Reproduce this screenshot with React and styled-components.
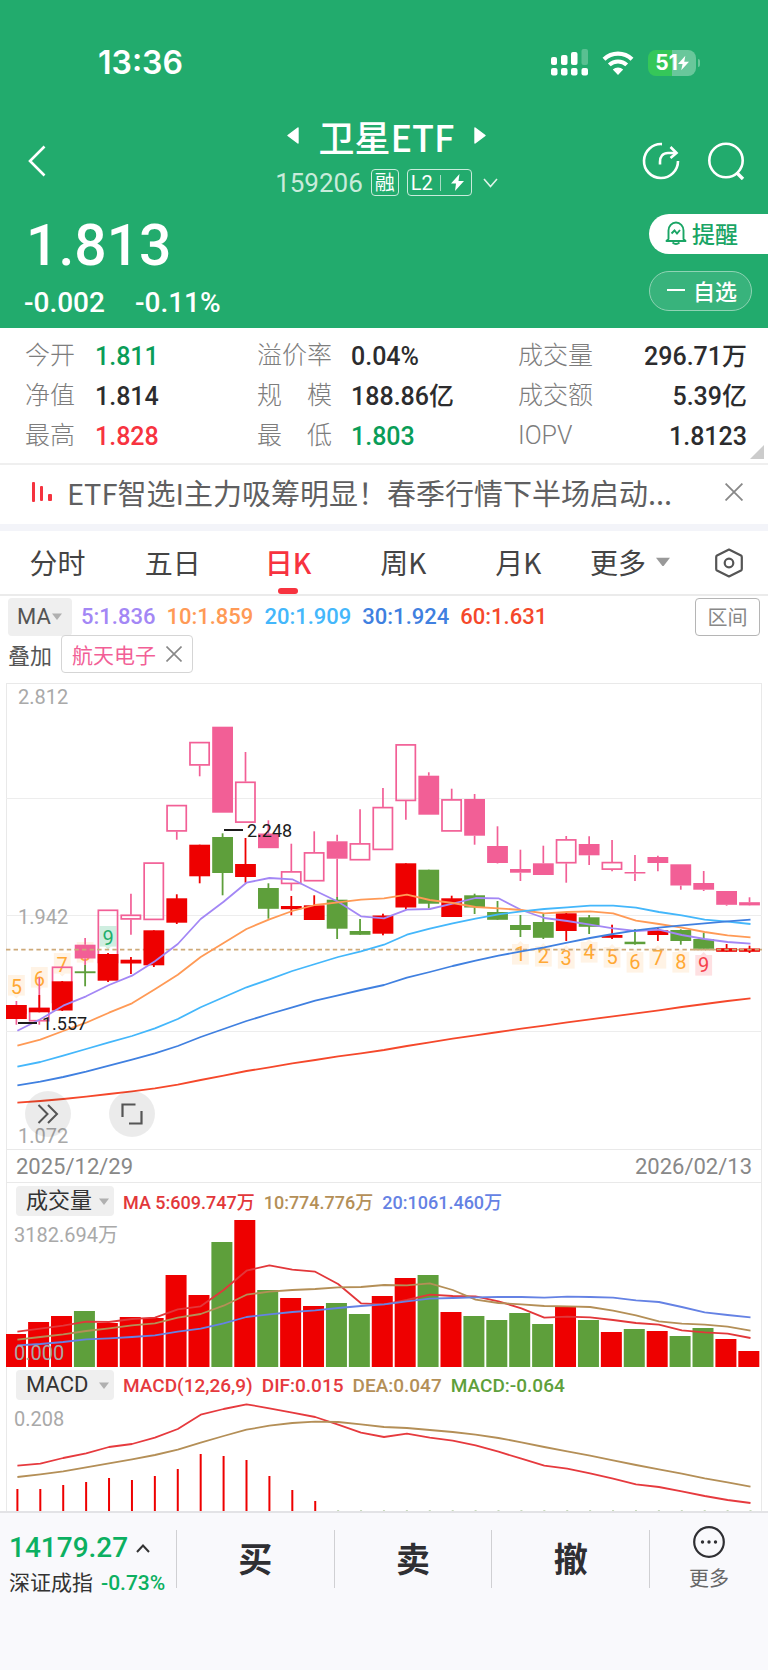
import React from "react";
import styled, { createGlobalStyle } from "styled-components";

const STEP = 22.91;
const cx = (i) => 10.4 + i * STEP;
const line = (ys) => ys.map((y, i) => `${(cx(i) + 1).toFixed(1)},${y}`).join(" ");

const RED = "#ee0000";
const GREEN = "#5e9f3b";
const PINK = "#f25f96";

// 1 = up day, 0 = down day
const trend = [
  1, 1, 1, 0, 1, 1, 1, 1, 1, 0, 1, 0, 1, 1, 0, 0, 1, 1, 0, 1, 0, 0, 0, 0, 1, 0,
  1, 0, 1, 0, 0, 1, 1,
];

// [high, body top, body bottom, low]
const candles = [
  [322, 322, 336, 336], [312, 324.7, 329.3, 329.3], [298, 298.3, 327.5, 328],
  [282, 288.3, 290.2, 303.3], [270, 271, 297.7, 299], [274, 276.7, 280.5, 291],
  [247.3, 247.3, 282.3, 284], [211.3, 215.3, 239.7, 241], [161.7, 161.7, 193.3, 200.3],
  [150.3, 154, 190, 212.3], [155, 181, 194, 199.7], [200.3, 205, 225.8, 235.7],
  [213, 223, 226.2, 232.3], [212.3, 222.3, 237, 237], [214, 216.7, 245.7, 256],
  [236, 248, 251.8, 251.8], [230.7, 232.5, 250.7, 252.3], [180.3, 180.3, 224.5, 226.5],
  [186.7, 186.7, 220.7, 225.5], [212.7, 215.3, 234, 234], [210.7, 212.3, 224.5, 231],
  [218, 229, 236.8, 236.8], [232, 242, 247, 254], [231, 239, 254.8, 256],
  [229.5, 230.3, 248, 258], [232, 234.3, 243.8, 251], [241.7, 252, 254.8, 256],
  [246, 258.7, 261.2, 261.7], [244.3, 247.3, 252, 258], [246.3, 247, 258, 261.7],
  [249.7, 256, 265.8, 265.8], [261, 265.2, 268.8, 268.8], [262.7, 265.5, 268.8, 270],
];

// [high, body top, body bottom, low, filled]
const overlay = [
  [318, 326, 331, 341.7, 1], [294.3, 325, 338.3, 341.7, 0], [283.7, 283.7, 320, 320, 0],
  [255, 261.7, 275.5, 288, 1], [226.7, 226.7, 280, 280, 0], [210.7, 231.7, 236.5, 251.7, 0],
  [179.5, 179.5, 237, 237, 0], [122, 122, 148.5, 156.7, 0], [59, 59, 82.5, 93.3, 0],
  [43.7, 43.7, 129.7, 129.7, 1], [69, 98.7, 139.7, 139.7, 0], [137.3, 150.5, 165.2, 165.2, 1],
  [160.7, 188.3, 201, 207.7, 0], [148.3, 169.3, 198.3, 198.3, 0], [151.7, 158.3, 175.7, 214.3, 1],
  [126.3, 160.3, 177.3, 177.3, 0], [105, 124, 167, 167, 0], [61.3, 61.3, 118, 136.7, 0],
  [89.3, 92.7, 131.7, 131.7, 1], [105.7, 116.3, 148.5, 148.5, 0], [111, 116, 152.7, 161.7, 1],
  [143.3, 163, 180, 180.5, 1], [166.7, 186, 189.7, 198, 1], [162.7, 180.3, 192, 192, 1],
  [153, 156.3, 180.3, 199.7, 0], [153.3, 161, 172.3, 182, 1], [157, 179, 186.7, 188.3, 0],
  [172, 189, 190.5, 198, 1], [172.7, 174, 180, 188.3, 1], [181.3, 181.3, 202.5, 206.7, 1],
  [188, 200, 206.7, 208, 1], [208, 208, 221.8, 222.7, 1], [214.3, 219.2, 222.4, 222.7, 1],
];

const priceLines = [
  {
    color: "#a387f5",
    ys: [347.7, 336.3, 322.7, 313.3, 302, 292.7, 278.3, 261, 236, 218.7, 199.7, 195, 196.3, 207.7, 218.7, 233.3, 235.3, 226.7, 226, 220.7, 215, 215.3, 227, 235, 238, 241.7, 245.3, 248, 246.7, 252, 256, 259, 260.7],
  },
  {
    color: "#ff9a56",
    ys: [362.7, 356.7, 348, 339.7, 329.7, 320.3, 306.3, 291.7, 274, 260, 246, 236.3, 228, 222, 219.3, 216.7, 215.3, 211.7, 217, 220, 224, 225.3, 227, 230.3, 229, 228.3, 230.3, 237.7, 241, 244.7, 249, 252.3, 254.3],
  },
  {
    color: "#44b7fb",
    ys: [383.7, 379, 372.7, 366, 359.3, 353, 345.3, 336, 324.3, 314.3, 304.3, 296.3, 288, 281, 274, 268.3, 261.7, 251.7, 245.7, 240.3, 235.7, 231.3, 228.3, 226, 224.3, 222.7, 222.7, 224.7, 229, 232.3, 236.7, 238.7, 241],
  },
  {
    color: "#4080e0",
    ys: [402.3, 398.7, 394, 388.7, 382.7, 376.7, 370.3, 363, 354, 346, 338, 331, 324.3, 317.7, 312.3, 307, 302, 294.7, 289, 283, 277.7, 272.7, 268.3, 264.3, 259.7, 255, 251, 247.3, 244.7, 242.3, 240.3, 238.3, 236.7],
  },
  {
    color: "#f5482b",
    ys: [419.7, 418, 416, 413.7, 411, 408.3, 405.3, 401.7, 397, 392.7, 388, 384.3, 380.3, 377, 373.3, 370.3, 367, 363, 359.3, 355.7, 352.3, 349, 345.7, 342.7, 339.3, 336.3, 333.3, 330.3, 327.3, 324, 321, 318, 315.3],
  },
];

const volumes = [
  33, 45, 51, 56, 44, 50, 49, 92, 72, 125, 147, 77, 69, 61, 64, 53, 71, 89, 92,
  55, 51, 47, 54, 43, 60, 47, 35, 38, 36, 31, 39, 28, 16,
];

const volumeLines = [
  {
    color: "#e2373a",
    ys: [112.7, 109.7, 106.7, 102.7, 103, 100, 98.7, 90.3, 87.3, 71, 51.7, 46.3, 50.7, 52.7, 65, 84.3, 85.3, 81, 75.7, 77, 77.3, 82.3, 89.3, 98.7, 97.7, 98.3, 101, 104, 105.7, 111.3, 113.3, 114.7, 119],
  },
  {
    color: "#b48f57",
    ys: [120.7, 118, 115.3, 112, 109.3, 106.3, 104.3, 98.7, 95, 86.7, 75.7, 72.7, 71, 70, 68.3, 68, 66, 66.3, 64.3, 71, 80.7, 84, 85.3, 87, 87.3, 88, 91.7, 96.3, 102.3, 104.7, 105.7, 107.7, 111.7],
  },
  {
    color: "#6582e4",
    ys: [126.3, 125, 123, 120.3, 119.3, 118, 116.3, 112.7, 109.7, 104.3, 98, 95.3, 93, 91.3, 89, 87, 85.3, 82.3, 79.7, 79, 78.3, 78, 78, 78.7, 77.7, 78, 78.7, 81.3, 83, 88, 93.3, 96, 98.3],
  },
];

const macdBars = [22, 22, 26, 29, 33, 31, 35, 42, 57, 55, 51, 35, 21, 10];

const macdLines = [
  {
    color: "#e63a3e",
    ys: [62.7, 60.7, 55, 50.3, 44, 41, 34.7, 26, 11.7, 6, 1.3, 5.3, 9.7, 14, 21.7, 29.7, 34, 30.7, 34.7, 37.7, 42.3, 48.7, 55.7, 62.7, 65.7, 70.3, 75.7, 81.3, 84, 88.3, 93, 97, 100],
  },
  {
    color: "#b48f57",
    ys: [74, 71.3, 68.3, 64.3, 60.3, 56.3, 52, 46.7, 39.7, 33, 26.7, 22.7, 20, 18.7, 19, 21.3, 24, 25, 27, 29, 31.7, 35, 39.3, 44, 48.3, 52.7, 57.3, 62, 66.3, 70.7, 75.3, 79.3, 83.7],
  },
];

// nine-turn counts: [candle, count, top]
const upCounts = [
  [0, 5, 292], [1, 6, 284], [2, 7, 270], [3, 8, 259], [4, 9, 243],
];
const downCounts = [
  [22, 1, 261], [23, 2, 263], [24, 3, 265], [25, 4, 259], [26, 5, 264],
  [27, 6, 269], [28, 7, 265], [29, 8, 269], [30, 9, 272],
];

const stats = [
  ["今开", "1.811", "#0a9d58"],
  ["溢价率", "0.04%"],
  ["成交量", "296.71万"],
  ["净值", "1.814"],
  ["规　模", "188.86亿"],
  ["成交额", "5.39亿"],
  ["最高", "1.828", "#f7333f"],
  ["最　低", "1.803", "#0a9d58"],
  ["IOPV", "1.8123"],
];

const tabs = ["分时", "五日", "日K", "周K", "月K"];

const Count = ({ item: [i, n, y], down }) => {
  const nine = n === 9;
  const color = nine ? (down ? "#f5404c" : "#1fae6c") : "#ffa834";
  const back = nine ? (down ? "#fee0e2" : "#cfeee0") : "#fff3e5";
  const x = cx(i);
  return (
    <g>
      <rect x={x - 8.4} y={y} width="16.8" height="20.6" fill={back} />
      {down ? (
        <path d={`M${x - 3} ${y}l3 -3l3 3z`} fill={back} />
      ) : (
        <path d={`M${x - 3} ${y + 20.6}l3 3l3 -3z`} fill={back} />
      )}
      <text x={x} y={y + (down ? 17 : 19)} fontSize="20" textAnchor="middle" fill={color}>
        {n}
      </text>
    </g>
  );
};

const Lines = ({ items }) =>
  items.map((l) => (
    <polyline
      key={l.color}
      points={line(l.ys)}
      fill="none"
      stroke={l.color}
      strokeWidth="1.8"
      strokeLinejoin="round"
    />
  ));

const PriceChart = () => (
  <Chart viewBox="0 0 756 466" role="img" aria-label="日K">
    {[116, 233, 349].map((y) => (
      <rect key={y} x="0" y={y - 1} width="756" height="1" fill="#ededed" />
    ))}
    <g fontSize="20" fill="#a9a9a9">
      <text x="12" y="21">2.812</text>
      <text x="12" y="241">1.942</text>
      <text x="12" y="460">1.072</text>
    </g>
    {upCounts.map((c) => (
      <Count key={c[0]} item={c} />
    ))}
    {downCounts.map((c) => (
      <Count key={c[0]} item={c} down />
    ))}
    {overlay.map(([h, t, b, l, filled], i) => (
      <g key={i} stroke={PINK} strokeWidth="1.7">
        {h < t && <path d={`M${cx(i)} ${h}V${t}`} />}
        {l > b && <path d={`M${cx(i)} ${b}V${l}`} />}
        {filled ? (
          <rect x={cx(i) - 10.4} y={t} width="20.8" height={b - t} fill={PINK} stroke="none" />
        ) : (
          <rect x={cx(i) - 9.7} y={t + 0.6} width="19.2" height={b - t - 1.2} fill="none" />
        )}
      </g>
    ))}
    <path d="M0 266.7H756" stroke="#cda978" strokeWidth="1.7" strokeDasharray="4.4 3.2" />
    {candles.map(([h, t, b, l], i) => (
      <g key={i} fill={trend[i] ? RED : GREEN}>
        <rect x={cx(i) - 0.9} y={h} width="1.8" height={l - h} />
        <rect x={cx(i) - 10.4} y={t} width="20.8" height={b - t} />
      </g>
    ))}
    <path d="M688 266.7H756" stroke="#cda978" strokeWidth="1.7" strokeDasharray="4.4 3.2" />
    <Lines items={priceLines} />
    <g fill="#1c1c1c" fontSize="18">
      <rect x="218" y="146" width="19" height="2" />
      <text x="241" y="154">2.248</text>
      <rect x="12" y="339" width="19" height="2" />
      <text x="36" y="347">1.557</text>
    </g>
  </Chart>
);

const VolumeChart = () => (
  <Chart viewBox="0 0 756 148" role="img" aria-label="成交量">
    {volumes.map((v, i) => (
      <rect
        key={i}
        x={i ? cx(i) - 11.2 : 0}
        y={148 - v}
        width={i ? 21 : 20}
        height={v}
        fill={trend[i] ? RED : GREEN}
      />
    ))}
    <Lines items={volumeLines} />
    <g fontSize="20" fill="#a9a9a9">
      <text x="8" y="23">3182.694万</text>
      <text x="8" y="141">0.000</text>
    </g>
  </Chart>
);

const MacdChart = () => (
  <Chart viewBox="0 0 756 108" role="img" aria-label="MACD">
    {trend.map((_, i) =>
      macdBars[i] ? (
        <rect key={i} x={cx(i)} y={108 - macdBars[i]} width="2" height={macdBars[i]} fill={RED} />
      ) : (
        <rect key={i} x={cx(i)} y="107" width="2" height="1" fill="#c9d9bd" />
      )
    )}
    <Lines items={macdLines} />
    <text x="8" y="23" fontSize="20" fill="#a9a9a9">0.208</text>
  </Chart>
);

const Caret = ({ size = 10, color = "#b0b0b0" }) => (
  <svg width={size} height={size * 0.7} viewBox="0 0 10 7">
    <path d="M0 .5H10L5 7z" fill={color} />
  </svg>
);

const Cross = ({ size = 16, color = "#888" }) => (
  <svg width={size} height={size} viewBox="0 0 16 16">
    <path d="M.5 .5L15.5 15.5M15.5 .5L.5 15.5" stroke={color} strokeWidth="1.6" />
  </svg>
);

const Picker = ({ label, children }) => (
  <PickerBox>
    <select aria-label={label}>
      <option>{children}</option>
    </select>
    <Caret />
  </PickerBox>
);

export default function App() {
  return (
    <Page>
      <GlobalStyle />
      <Header>
        <StatusBar>
          <time>13:36</time>
          <StatusIcons>
            <svg width="37" height="27" viewBox="0 0 37 27" fill="#fff">
              <rect x="0" y="8" width="6" height="8" rx="2" />
              <rect x="10" y="6" width="6.5" height="10" rx="2" />
              <rect x="20" y="3" width="6.5" height="13" rx="2" />
              <rect x="30.5" y="0" width="6.5" height="16" rx="2" opacity=".25" />
              {[0, 10, 20, 30.5].map((x) => (
                <rect key={x} x={x} y="19" width="6.5" height="7.5" rx="2" />
              ))}
            </svg>
            <svg width="32" height="24" viewBox="0 0 32 24" fill="none" stroke="#fff">
              <path d="M2 8.2A20.3 20.3 0 0 1 30 8.2" strokeWidth="4.2" />
              <path d="M7.3 13.9A12.6 12.6 0 0 1 24.7 13.9" strokeWidth="4" />
              <path d="M16 24L10.8 18.6A7.6 7.6 0 0 1 21.2 18.6Z" fill="#fff" stroke="none" />
            </svg>
            <Battery>
              51
              <svg width="11" height="16" viewBox="0 0 12 16">
                <path d="M8 0L0 9H5L3.5 16L12 6.5H6.8z" fill="#fff" />
              </svg>
            </Battery>
          </StatusIcons>
        </StatusBar>
        <NavBar>
          <IconButton aria-label="返回">
            <svg width="18" height="32" viewBox="0 0 18 32" fill="none" stroke="#fff" strokeWidth="2.6">
              <path d="M16.5 1.5L2 16L16.5 30.5" />
            </svg>
          </IconButton>
          <TitleBlock>
            <Title>
              <ArrowButton aria-label="上一个">
                <svg width="12" height="17" viewBox="0 0 12 17">
                  <path d="M11 1V16L1 8.5z" fill="#fff" stroke="#fff" strokeWidth="1.4" strokeLinejoin="round" />
                </svg>
              </ArrowButton>
              <h1>卫星ETF</h1>
              <ArrowButton aria-label="下一个">
                <svg width="12" height="17" viewBox="0 0 12 17">
                  <path d="M1 1V16L11 8.5z" fill="#fff" stroke="#fff" strokeWidth="1.4" strokeLinejoin="round" />
                </svg>
              </ArrowButton>
            </Title>
            <CodeRow>
              <span>159206</span>
              <Badge>融</Badge>
              <Badge>
                L2
                <i />
                <svg width="13" height="17" viewBox="0 0 13 17">
                  <path d="M8.5 0L0 9.5H5L4 17L13 7H7.5z" fill="#fff" />
                </svg>
              </Badge>
              <svg width="15" height="10" viewBox="0 0 15 10" fill="none" stroke="#dff3e9" strokeWidth="1.6">
                <path d="M1 1L7.5 8.5L14 1" />
              </svg>
            </CodeRow>
          </TitleBlock>
          <NavActions>
            <IconButton aria-label="分享">
              <svg width="38" height="38" viewBox="0 0 38 38" fill="none" stroke="#fff" strokeWidth="2.6">
                <path d="M20 2.1A17 17 0 1 0 36 19" />
                <path d="M18 22.5V20C18 14.5 21 11 26 11H34" />
                <path d="M28.5 5L34.5 11L28.5 16" />
              </svg>
            </IconButton>
            <IconButton aria-label="搜索">
              <svg width="38" height="38" viewBox="0 0 38 38" fill="none" stroke="#fff" strokeWidth="2.6">
                <circle cx="19" cy="18.5" r="16.7" />
                <path d="M29.5 30.5L36 37" strokeWidth="3.4" />
              </svg>
            </IconButton>
          </NavActions>
        </NavBar>
        <Quote>
          <div>
            <Price>1.813</Price>
            <Change>
              <span>-0.002</span>
              <span>-0.11%</span>
            </Change>
          </div>
          <QuoteActions>
            <RemindButton>
              <svg width="22" height="24" viewBox="0 0 22 24" fill="none" stroke="#1aa565" strokeWidth="1.9">
                <path d="M3.5 18V9.5A7.5 8 0 0 1 18.5 9.5V18L20.5 20H1.5z" strokeLinejoin="round" />
                <path d="M7.5 21.5Q11 24.5 14.5 21.5" />
                <path d="M6.5 12.5L9.5 9.5L12 12.5L15 9" />
              </svg>
              提醒
            </RemindButton>
            <FavButton>
              <i />
              自选
            </FavButton>
          </QuoteActions>
        </Quote>
      </Header>

      <Stats>
        {stats.map(([label, value, color]) => (
          <Stat key={label} $color={color}>
            <dt>{label}</dt>
            <dd>{value}</dd>
          </Stat>
        ))}
      </Stats>

      <Notice>
        <svg width="20" height="22" viewBox="0 0 20 22" fill="#f5333f">
          <rect x="0" y="1" width="3" height="20" rx="1" />
          <rect x="8" y="5" width="3" height="15" rx="1" />
          <rect x="16" y="13" width="4" height="7" rx="1" />
        </svg>
        <a href="#notice">ETF智选I主力吸筹明显！春季行情下半场启动...</a>
        <PlainButton aria-label="关闭">
          <Cross size={18} />
        </PlainButton>
      </Notice>

      <Tabs>
        {tabs.map((t) => (
          <Tab key={t} $active={t === "日K"}>
            {t}
          </Tab>
        ))}
        <MoreTab>
          更多
          <Caret size={14} color="#999" />
        </MoreTab>
        <PlainButton aria-label="设置">
          <svg width="28" height="30" viewBox="0 0 28 30" fill="none" stroke="#555" strokeWidth="2.2">
            <path d="M14 1.5L26 7.5Q26.8 8 26.8 9V21Q26.8 22 26 22.5L14 28.5L2 22.5Q1.2 22 1.2 21V9Q1.2 8 2 7.5z" strokeLinejoin="round" />
            <circle cx="14" cy="15" r="4.3" />
          </svg>
        </PlainButton>
      </Tabs>

      <MaRow>
        <Picker label="指标">MA</Picker>
        <MaValues>
          <Val $color="#a387f5">5:1.836</Val>
          <Val $color="#ff9a56">10:1.859</Val>
          <Val $color="#44b7fb">20:1.909</Val>
          <Val $color="#4080e0">30:1.924</Val>
          <Val $color="#f5482b">60:1.631</Val>
        </MaValues>
        <RangeButton>区间</RangeButton>
      </MaRow>
      <OverlayRow>
        叠加
        <Chip>
          航天电子
          <Cross />
        </Chip>
      </OverlayRow>

      <Frame>
        <ChartBox>
          <PriceChart />
          <ChartTools>
            <RoundButton aria-label="展开">
              <svg width="22" height="20" viewBox="0 0 22 20" fill="none" stroke="#555" strokeWidth="2">
                <path d="M1.5 1L10.5 10L1.5 19M11 1L20 10L11 19" />
              </svg>
            </RoundButton>
            <RoundButton aria-label="全屏">
              <svg width="22" height="22" viewBox="0 0 22 22" fill="none" stroke="#555" strokeWidth="2.2">
                <path d="M1.5 14V1.5H14.5M20.5 8V20.5H8" />
              </svg>
            </RoundButton>
          </ChartTools>
        </ChartBox>
        <Dates>
          <time>2025/12/29</time>
          <time>2026/02/13</time>
        </Dates>
        <PanelHead $size="18px">
          <Picker label="副图一">成交量</Picker>
          <Val $color="#e2373a">MA 5:609.747万</Val>
          <Val $color="#b48f57">10:774.776万</Val>
          <Val $color="#6582e4">20:1061.460万</Val>
        </PanelHead>
        <VolumeChart />
        <PanelHead $size="19px">
          <Picker label="副图二">MACD</Picker>
          <Val $color="#e63a3e">MACD(12,26,9)</Val>
          <Val $color="#e63a3e">DIF:0.015</Val>
          <Val $color="#b48f57">DEA:0.047</Val>
          <Val $color="#5e9f3b">MACD:-0.064</Val>
        </PanelHead>
        <MacdChart />
      </Frame>

      <BottomBar>
        <IndexBox>
          <IndexValue>
            14179.27
            <svg width="14" height="9" viewBox="0 0 14 9" fill="none" stroke="#333" strokeWidth="2">
              <path d="M1 8L7 1.5L13 8" />
            </svg>
          </IndexValue>
          <IndexName>
            深证成指<em>-0.73%</em>
          </IndexName>
        </IndexBox>
        <TradeButton>买</TradeButton>
        <TradeButton>卖</TradeButton>
        <TradeButton>撤</TradeButton>
        <MoreButton>
          <svg width="34" height="34" viewBox="0 0 34 34">
            <circle cx="17" cy="17" r="14.8" fill="none" stroke="#2f2f33" strokeWidth="2.2" />
            <g fill="#2f2f33">
              <circle cx="10.5" cy="17" r="1.7" />
              <circle cx="17" cy="17" r="1.7" />
              <circle cx="23.5" cy="17" r="1.7" />
            </g>
          </svg>
          更多
        </MoreButton>
      </BottomBar>
    </Page>
  );
}

const GlobalStyle = createGlobalStyle`
  * {
    box-sizing: border-box;
  }

  body {
    margin: 0;
    background: #fff;
    color: #333;
    font-family: Roboto, "Noto Sans CJK SC", sans-serif;
  }

  button, select {
    padding: 0;
    border: 0;
    background: none;
    color: inherit;
    font: inherit;
  }

  svg {
    display: block;
    flex-shrink: 0;
  }
`;

const Page = styled.div`
  min-height: 100vh;
  display: flex;
  flex-direction: column;
`;

const Header = styled.header`
  background: #22ab6d;
  color: #fff;
`;

const StatusBar = styled.div`
  height: 115px;
  padding: 10px 72px 0 98px;
  display: flex;
  justify-content: space-between;
  align-items: center;

  time {
    font-family: Inter, sans-serif;
    font-size: 32px;
    font-weight: 600;
  }
`;

const StatusIcons = styled.div`
  display: flex;
  align-items: center;
  gap: 14px;
`;

const Battery = styled.div`
  position: relative;
  width: 48px;
  height: 26px;
  display: flex;
  align-items: center;
  justify-content: center;
  border-radius: 8px;
  background: linear-gradient(to right, #35c759 51%, #69c79b 51%);
  font-family: Inter, sans-serif;
  font-size: 21px;
  font-weight: 700;

  &::after {
    content: "";
    position: absolute;
    right: -4px;
    width: 2px;
    height: 8px;
    border-radius: 0 2px 2px 0;
    background: #69c79b;
  }
`;

const NavBar = styled.nav`
  height: 90px;
  padding: 2px 23px 0 28px;
  display: grid;
  grid-template-columns: 1fr auto 1fr;
  align-items: center;
`;

const IconButton = styled.button`
  justify-self: start;
`;

const TitleBlock = styled.div`
  display: flex;
  flex-direction: column;
  align-items: center;
  gap: 15px;
  padding-bottom: 8px;
`;

const Title = styled.div`
  display: flex;
  align-items: center;
  gap: 20px;

  h1 {
    margin: 0;
    font-family: "Noto Sans CJK SC", sans-serif;
    font-size: 36px;
    font-weight: 500;
    line-height: 36px;
  }
`;

const ArrowButton = styled.button``;

const CodeRow = styled.div`
  display: flex;
  align-items: center;
  gap: 8px;
  font-size: 26px;
  line-height: 28px;

  span:first-child {
    color: #c9ebdb;
  }

  svg:last-child {
    margin-left: 3px;
  }
`;

const Badge = styled.span`
  height: 27px;
  padding: 0 3px;
  display: flex;
  align-items: center;
  gap: 7px;
  border: 1px solid #c9ebdb;
  border-radius: 4px;
  font-size: 20px;

  i {
    width: 1px;
    height: 16px;
    background: #a8dcc4;
  }

  svg {
    margin: 0 4px;
  }
`;

const NavActions = styled.div`
  display: flex;
  justify-content: flex-end;
  gap: 27px;
`;

const Quote = styled.div`
  height: 123px;
  padding: 9px 0 0 24px;
  display: flex;
  justify-content: space-between;
`;

const Price = styled.div`
  padding-left: 2px;
  font-size: 57px;
  font-weight: 500;
  line-height: 64px;
`;

const Change = styled.div`
  margin-top: 8px;
  display: flex;
  gap: 30px;
  font-size: 28px;
  font-weight: 500;
  line-height: 34px;
`;

const QuoteActions = styled.div`
  width: 119px;
  display: flex;
  flex-direction: column;
  gap: 17px;
`;

const RemindButton = styled.button`
  height: 40px;
  padding: 0 0 2px 16px;
  display: flex;
  align-items: center;
  gap: 5px;
  border-radius: 20px 0 0 20px;
  background: #fff;
  color: #1aa565;
  font-size: 23px;
  font-weight: 500;
`;

const FavButton = styled.button`
  height: 40px;
  margin-right: 16px;
  padding: 0 0 2px 17px;
  display: flex;
  align-items: center;
  gap: 8px;
  border: 1px solid #8fd3b4;
  border-radius: 20px;
  background: #38b37c;
  font-size: 22px;
  font-weight: 500;

  i {
    width: 18px;
    height: 2px;
    background: #fff;
  }
`;

const Stats = styled.dl`
  position: relative;
  margin: 0;
  padding: 9px 21px 6px 25px;
  display: grid;
  grid-template-columns: 232fr 261fr 229fr;
  border-bottom: 2px solid #efefef;

  &::after {
    content: "";
    position: absolute;
    right: 4px;
    bottom: 4px;
    border: 7px solid transparent;
    border-right-color: #ccc;
    border-bottom-color: #ccc;
  }
`;

const Stat = styled.div`
  display: flex;
  line-height: 40px;

  dt {
    width: 70px;
    color: #7d7d7d;
    font-size: 25px;
    font-weight: 300;
    line-height: 38px;
    white-space: nowrap;
  }

  dd {
    margin: 0;
    color: ${(props) => props.$color || "#2c2c2e"};
    font-size: 25px;
    font-weight: 500;
  }

  &:nth-child(3n + 2) dt {
    width: 94px;
  }

  &:nth-child(3n) {
    justify-content: space-between;
  }
`;

const Notice = styled.section`
  height: 66px;
  padding: 0 25px 5px 32px;
  display: flex;
  align-items: center;
  gap: 15px;
  border-bottom: 7px solid #f3f4f9;

  a {
    flex: 1;
    overflow: hidden;
    color: #5f5f61;
    font-family: "Noto Sans CJK SC", sans-serif;
    font-size: 29px;
    line-height: 40px;
    text-decoration: none;
    white-space: nowrap;
  }
`;

const PlainButton = styled.button``;

const Tabs = styled.div`
  height: 65px;
  padding-right: 25px;
  display: flex;
  align-items: center;
  border-bottom: 2px solid #ebebeb;
  font-family: "Noto Sans CJK SC", sans-serif;
  font-size: 28px;
`;

const Tab = styled.button`
  position: relative;
  flex: 1;
  height: 100%;
  padding-bottom: 2px;
  color: ${(props) => (props.$active ? "#f7333f" : "#444")};
  font-weight: ${(props) => (props.$active ? 500 : 400)};

  &::after {
    content: "";
    position: absolute;
    left: 50%;
    bottom: 0;
    width: 20px;
    height: 6px;
    margin-left: -10px;
    border-radius: 3px;
    background: ${(props) => (props.$active ? "#f7333f" : "none")};
  }
`;

const MoreTab = styled.button`
  margin: 0 45px 0 14px;
  padding-bottom: 2px;
  display: flex;
  align-items: center;
  gap: 10px;
  color: #444;
`;

const PickerBox = styled.span`
  display: flex;
  align-items: center;
  justify-content: space-between;
  height: 30px;
  padding: 0 5px 0 10px;
  gap: 6px;
  border-radius: 4px;
  background: #efefef;
  font-size: 22px;

  select {
    appearance: none;
    line-height: 30px;
  }
`;

const MaRow = styled.div`
  height: 41px;
  padding: 0 8px;
  display: flex;
  align-items: center;
  justify-content: space-between;

  ${PickerBox} {
    height: 38px;
    gap: 1px;
    padding: 0 10px 0 9px;
    color: #555;
  }
`;

const MaValues = styled.div`
  flex: 1;
  margin-left: 9px;
  display: flex;
  gap: 11px;
  font-size: 22px;
`;

const Val = styled.span`
  color: ${(props) => props.$color};
  font-weight: 500;
  white-space: nowrap;
`;

const RangeButton = styled.button`
  width: 65px;
  height: 38px;
  border: 1px solid #b5b5b5;
  border-radius: 4px;
  color: #888;
  font-size: 20px;
`;

const OverlayRow = styled.div`
  height: 46px;
  padding: 0 8px 12px;
  display: flex;
  align-items: center;
  gap: 9px;
  color: #555;
  font-size: 22px;
`;

const Chip = styled.button`
  height: 38px;
  padding: 0 10px;
  display: flex;
  align-items: center;
  gap: 10px;
  border: 1px solid #d5d5d5;
  border-radius: 4px;
  color: #f25f96;
  font-size: 21px;
`;

const Frame = styled.main`
  margin: 0 6px;
  box-shadow: inset 1px 0 #e9e9e9, inset -1px 0 #e9e9e9, inset 0 1px #e9e9e9;
`;

const Chart = styled.svg`
  width: 100%;
  height: auto;
  font-family: Roboto, "Noto Sans CJK SC", sans-serif;
`;

const ChartBox = styled.div`
  position: relative;
`;

const ChartTools = styled.div`
  position: absolute;
  left: 19px;
  bottom: 12px;
  display: flex;
  gap: 38px;
`;

const RoundButton = styled.button`
  width: 46px;
  height: 46px;
  display: flex;
  align-items: center;
  justify-content: center;
  border-radius: 50%;
  background: rgba(0, 0, 0, 0.08);
`;

const Dates = styled.div`
  height: 34px;
  padding: 0 10px;
  display: flex;
  align-items: center;
  justify-content: space-between;
  border: solid #e9e9e9;
  border-width: 1px 0;
  color: #888;
  font-size: 22px;
`;

const PanelHead = styled.div`
  height: 36px;
  padding-left: 10px;
  display: flex;
  align-items: center;
  gap: 9px;
  font-size: ${(props) => props.$size};

  ${PickerBox} {
    min-width: 98px;
  }
`;

const BottomBar = styled.footer`
  flex: 1;
  padding: 17px 0 83px;
  display: flex;
  border-top: 2px solid #e3e3e6;
  background: #f9f9fc;
`;

const IndexBox = styled.div`
  width: 176px;
  padding-left: 9px;
`;

const IndexValue = styled.div`
  display: flex;
  align-items: center;
  gap: 8px;
  color: #0cb061;
  font-size: 28px;
  font-weight: 500;
  line-height: 36px;
`;

const IndexName = styled.div`
  font-size: 21px;
  line-height: 34px;
  white-space: nowrap;

  em {
    margin-left: 8px;
    color: #0cb061;
    font-style: normal;
    font-weight: 500;
  }
`;

const TradeButton = styled.button`
  flex: 1;
  height: 58px;
  padding-bottom: 4px;
  border-left: 1px solid #d0d0d3;
  color: #2f2f33;
  font-size: 34px;
  font-weight: 700;
`;

const MoreButton = styled.button`
  width: 119px;
  height: 58px;
  display: flex;
  flex-direction: column;
  align-items: center;
  justify-content: center;
  gap: 6px;
  border-left: 1px solid #d0d0d3;
  color: #666;
  font-size: 20px;
  line-height: 28px;
`;
